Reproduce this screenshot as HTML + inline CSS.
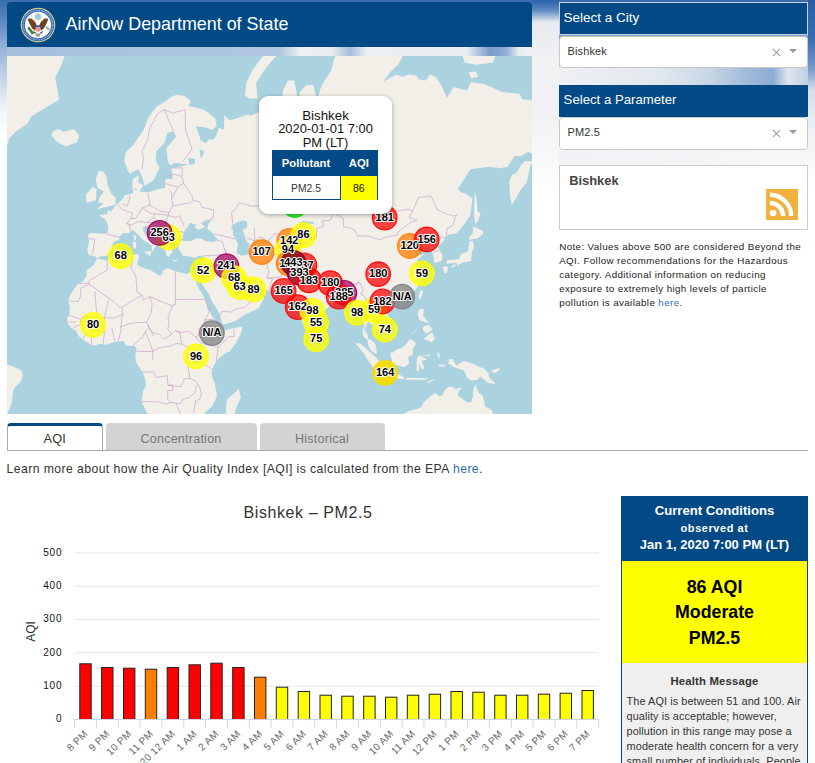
<!DOCTYPE html>
<html><head><meta charset="utf-8"><title>AirNow Department of State</title>
<style>
*{box-sizing:border-box;margin:0;padding:0}
html,body{width:815px;height:763px;overflow:hidden;background:#fff;font-family:"Liberation Sans",sans-serif;color:#333}
.abs{position:absolute}
.tx{position:absolute;white-space:nowrap}
#sky{position:absolute;left:0;top:0;width:815px;height:300px;background:linear-gradient(180deg,#3a6cae 0px,#5585c0 18px,#98b5d8 50px,#cfdcec 85px,#f1f5f9 110px,#fff 140px);}
#sky2{position:absolute;left:532px;top:0;width:27px;height:300px;background:linear-gradient(180deg,#2a62aa 0px,#5a88c0 10px,#e6e9ee 22px,#f1f2f4 60px,#f0f1f4 110px,#f8f9fa 160px,#fff 200px)}
#sky3{position:absolute;left:808px;top:0;width:7px;height:300px;background:linear-gradient(180deg,#2a5ea6 0px,#3a6db2 40px,#7c9fcb 70px,#d5dfea 90px,#eef2f6 130px,#fff 190px)}
#sky4{position:absolute;left:559px;top:67px;width:249px;height:18px;background:linear-gradient(90deg,#eef0f3 0%,#e3e8ee 40%,#c9d6e6 60%,#a2bbd9 75%,#8eacd3 86%,#dfe6ee 92%,#c0d0e4 100%)}
#sky5{position:absolute;left:559px;top:149px;width:249px;height:16px;background:linear-gradient(90deg,#f0f2f5 0%,#f6f7f9 100%)}
#sky6{position:absolute;left:7px;top:47px;width:525px;height:9px;background:linear-gradient(90deg,#a6bfdc 0%,#b0c6e0 52%,#eef0f3 56%,#e8ecf0 62%,#a5bdda 65.3%,#eceff3 68.5%,#e9edf2 87.5%,#7a9dcc 92%,#8fadd4 95%,#e8ecf1 97.5%,#f0f2f5 100%)}
#hdr{left:7px;top:2px;width:525px;height:45px;background:#024a86;border-radius:4px 4px 0 0}
#seal{position:absolute;left:13.4px;top:4.9px}
.map{position:absolute;left:7px;top:56px}
.panelh{position:absolute;left:559px;width:249px;height:33px;background:#024a86;border:1px solid #c9d3df}
.sel{position:absolute;left:559px;width:249px;height:31px;background:#fff;border:1px solid #c8c8c8;border-radius:4px}
.sel .x{position:absolute;left:212.3px;top:11.3px}
.sel .ar{position:absolute;left:229px;top:12px;width:0;height:0;border-left:4px solid transparent;border-right:4px solid transparent;border-top:4.6px solid #999}
#box{left:559px;top:165px;width:249px;height:65px;border:1px solid #ccc;background:#fff}
#rss{position:absolute;left:206px;top:23px;width:32px;height:31px;background:#f1b13c}
a{color:#2f6db5;text-decoration:none}
#popup{left:259px;top:96px;width:133px;height:118px;background:#fff;border-radius:9px;box-shadow:0 1px 4px rgba(0,0,0,0.35)}
#ptab{position:absolute;left:13px;top:54px;width:106px;height:50px;border:1px solid #024a86}
#tabs{left:7px;top:423px;width:801px;height:28px;border-bottom:1px solid #aaa}
.tab{position:absolute;top:0;height:27px;background:#d3d3d3;border-radius:4px 4px 0 0}
.tab.on{background:#fff;border:1px solid #aaa;border-top:3px solid #024a86;border-bottom:none;height:27px}
.chart{position:absolute;left:0;top:0}
#cc{left:621px;top:496px;width:187px;height:267px;border-left:1px solid #024a86;border-right:1px solid #024a86;background:#efefef}
#cch{position:absolute;left:-1px;top:0;width:187px;height:65px;background:#024a86}
#ccy{position:absolute;left:0;top:65px;width:185px;height:102px;background:#ffff00}
</style></head><body>
<div id="sky"></div><div id="sky2"></div><div id="sky3"></div><div id="sky4"></div><div id="sky5"></div><div id="sky6"></div>
<div id="hdr" class="abs">
<svg id="seal" width="36" height="36" viewBox="0 0 36 36">
<circle cx="18" cy="18" r="17.3" fill="#d9c45a"/>
<circle cx="18" cy="18" r="16.6" fill="#f4f1e0"/>
<circle cx="18" cy="18" r="16.2" fill="#2f66b3"/>
<circle cx="18" cy="18" r="14.8" fill="none" stroke="#e4ecf7" stroke-width="1.1" stroke-dasharray="0.9 0.7" opacity="0.75"/>
<circle cx="18" cy="18" r="13.2" fill="#fbfbf8"/>
<circle cx="18" cy="9.8" r="3.9" fill="#e6ecef"/>
<circle cx="18" cy="9.8" r="3.0" fill="#9fcbe0"/>
<path d="M7.6 11.8 Q11.5 11 14.2 13.4 L16.3 17.2 L16 21.5 L14.6 23.5 L12.2 21.2 Q9.2 17 7.6 11.8Z" fill="#6f4320"/>
<path d="M28.4 11.8 Q24.5 11 21.8 13.4 L19.7 17.2 L20 21.5 L21.4 23.5 L23.8 21.2 Q26.8 17 28.4 11.8Z" fill="#6f4320"/>
<path d="M10.8 10.6 L15.2 15.2 M25.2 10.6 L20.8 15.2" stroke="#cdb84a" stroke-width="1"/>
<circle cx="18" cy="16.2" r="1.8" fill="#fff"/>
<rect x="15.6" y="18.3" width="4.8" height="1.9" fill="#2a5aa8"/>
<path d="M15.6 20.2 h4.8 v3.4 l-2.4 1.5 l-2.4 -1.5z" fill="#e98d8f"/>
<path d="M8 20.5 Q10.5 22.5 13 27" stroke="#3b8a3c" stroke-width="2.6" fill="none"/>
<path d="M25.8 19.8 L29.3 23" stroke="#a9a9a9" stroke-width="2"/>
<path d="M15.3 26.6 L20.7 26.6 L19.6 29.4 L16.4 29.4Z" fill="#9a9a9a"/>
<path d="M13.4 24.6 L15.6 26.2 M22.6 24.6 L20.4 26.2" stroke="#2a2a2a" stroke-width="1.1"/>
</svg>
</div>
<svg class="map" width="525" height="358" viewBox="7 56 525 358">
<rect x="7" y="56" width="525" height="358" fill="#aad3df"/>
<path d="M462.4 55.0L495.6 55.0L493.3 62.6L475.7 64.8L464.6 62.6ZM469.0 72.0L476.0 71.5L478.0 77.0L471.0 78.0ZM6.0 55.0L65.0 55.0L64.4 56.4L60.7 66.6L55.2 77.6L57.0 86.8L58.9 99.7L49.7 105.2L31.3 116.3L27.6 123.6L16.6 131.0L9.2 138.3L7.4 145.7L6.0 147.0ZM53.4 131.0L58.9 129.1L63.5 131.9L73.6 129.1L79.1 135.6L77.3 142.0L66.3 146.6L60.7 143.9L55.2 140.2L51.5 134.7ZM263.9 55.0L252.9 69.3L246.3 82.5L245.1 95.8L250.0 98.8L257.3 98.4L256.2 82.5L268.3 64.8L277.2 55.0ZM96.9 209.0L115.3 205.0L115.8 198.0L112.0 194.6L107.7 185.8L106.4 176.0L102.6 171.2L98.7 171.2L95.7 178.9L97.2 186.7L99.5 188.9L103.8 191.5L99.5 197.6L98.2 202.2L103.3 203.4ZM96.2 200.1L96.2 192.4L96.9 189.4L92.8 186.7L89.8 190.2L86.0 194.6L86.2 202.6L90.5 201.7ZM97.2 258.3L95.4 256.7L88.8 255.1L87.2 249.6L89.3 241.3L87.7 235.1L90.5 233.0L103.8 233.7L107.7 233.3L108.4 226.2L105.9 219.9L99.2 215.3L107.7 214.1L107.4 210.2L111.0 211.8L116.1 205.0L123.0 198.8L124.3 195.4L133.2 193.3L132.2 185.8L132.7 178.9L138.6 175.6L138.3 182.6L143.4 184.9L139.6 191.5L147.3 192.4L158.8 188.9L165.2 188.0L165.2 178.9L172.8 178.9L171.5 168.2L188.2 164.7L175.4 162.7L170.3 165.2L167.7 161.6L166.4 148.1L176.4 136.5L173.3 131.5L167.7 132.8L163.9 143.6L156.2 151.5L155.7 160.6L159.5 167.7L153.7 180.3L144.7 185.8L141.6 175.6L138.3 169.2L129.4 174.1L124.3 161.6L125.6 152.0L133.2 145.3L138.3 137.7L143.4 130.3L148.5 117.2L152.4 111.7L157.5 105.9L165.2 101.4L171.5 96.8L177.4 94.5L184.3 96.1L190.7 100.7L188.2 105.9L195.8 107.4L203.5 109.5L215.0 117.9L216.8 125.8L212.4 129.7L203.5 127.1L195.8 126.5L199.6 136.5L200.4 140.6L206.0 143.0L208.6 139.5L213.7 139.5L216.3 135.2L218.8 127.8L223.9 129.7L224.4 115.1L229.0 119.9L234.1 119.2L246.9 114.5L250.7 115.8L257.1 113.1L264.8 110.2L267.4 104.4L280.1 108.1L285.2 115.1L282.7 102.9L282.7 91.3L287.8 80.5L294.2 80.5L297.0 95.3L297.5 113.8L299.8 117.2L301.8 106.6L299.3 92.9L305.7 85.6L313.3 84.7L317.2 101.4L319.7 91.3L322.3 83.9L331.2 70.6L333.8 60.2L336.3 54.1L403.5 55.0L402.8 56.0L399.0 63.4L390.5 72.0L383.1 81.8L396.6 74.4L402.8 76.9L408.9 74.4L416.3 75.6L418.7 79.3L426.0 80.5L429.8 74.4L435.9 76.9L440.8 84.2L446.9 97.7L453.6 87.2L466.9 90.5L471.2 82.2L484.5 83.9L502.2 92.1L519.8 93.7L522.1 99.2L532.8 100.7L532.8 153.7L528.0 152.0L520.3 156.4L514.9 155.8L507.5 166.7L499.9 168.2L489.6 166.7L477.1 168.2L470.5 169.2L457.7 188.9L461.5 192.4L465.4 193.3L472.3 198.8L470.5 214.9L465.4 222.5L456.9 233.3L448.8 234.4L445.4 237.5L442.4 242.6L437.3 246.0L439.8 250.3L442.4 255.1L441.9 260.5L438.5 262.0L434.2 263.0L433.9 258.3L432.2 251.9L429.1 246.0L421.9 249.3L420.7 242.6L413.0 248.6L415.5 253.5L419.9 255.4L424.5 254.1L418.1 258.9L416.3 263.0L420.7 270.6L422.7 273.6L423.0 276.6L419.4 282.4L416.8 288.2L413.0 292.4L409.2 296.6L402.8 298.5L397.7 299.9L393.8 301.6L393.1 304.0L391.3 300.7L387.4 300.7L384.1 302.9L381.8 307.5L383.6 311.6L388.0 315.6L390.5 322.2L390.5 326.6L387.4 329.2L383.6 332.4L379.3 334.9L379.8 331.3L378.5 330.0L375.4 328.2L373.4 325.6L369.3 322.4L367.0 322.7L365.0 330.0L367.8 335.2L368.5 339.6L370.8 339.6L375.4 344.2L376.7 350.6L377.0 353.7L374.7 353.2L370.3 349.8L367.8 344.2L367.8 340.4L363.2 336.0L362.7 331.3L363.4 326.1L361.4 314.8L357.5 313.4L354.2 316.1L352.4 315.6L352.9 308.9L350.4 306.2L347.3 302.1L346.0 298.0L342.7 298.8L338.9 299.9L333.8 302.1L333.0 304.3L328.7 306.7L321.5 314.0L316.7 316.9L316.4 323.5L315.4 330.5L311.3 334.2L309.5 336.2L307.0 333.4L304.4 326.6L302.1 320.9L299.5 314.0L297.5 307.5L297.2 301.6L295.7 300.7L291.6 302.6L287.8 298.5L290.4 297.1L286.8 294.4L282.7 291.6L278.9 290.1L268.9 290.4L261.7 289.6L257.6 285.6L255.3 285.0L250.7 286.2L243.1 282.7L240.0 277.2L235.4 276.6L234.1 278.1L238.0 285.3L242.3 292.1L243.3 287.9L249.5 293.2L254.6 288.2L255.3 287.3L255.9 292.4L261.2 294.9L264.3 298.2L261.0 303.5L259.2 307.5L253.3 310.8L244.4 315.0L235.4 320.9L226.5 324.0L222.6 324.3L220.6 318.2L220.1 314.2L211.7 300.7L208.6 293.8L204.8 288.2L200.9 282.1L200.9 278.1L198.9 283.0L194.8 276.9L197.1 285.3L202.2 294.1L206.5 302.1L207.1 308.9L209.9 311.6L212.4 316.9L217.5 322.2L221.9 327.2L225.2 330.3L232.9 328.2L242.6 326.6L241.8 330.3L240.5 333.9L235.4 344.2L229.0 351.9L227.2 351.9L218.8 358.3L215.0 363.4L212.4 368.5L211.7 373.6L212.4 377.5L215.0 384.0L217.0 395.8L215.0 400.6L211.7 406.7L203.0 414.4L148.0 414.4L142.2 403.8L141.6 399.8L143.4 390.5L146.0 385.3L145.2 379.6L142.9 372.4L135.8 362.1L135.3 355.7L136.5 348.1L134.0 345.5L126.8 346.0L123.0 340.9L114.1 341.9L106.4 344.7L101.3 343.7L92.3 345.7L88.5 342.9L82.1 339.3L77.8 335.2L76.2 330.8L72.4 328.7L68.6 324.8L66.8 319.0L69.3 314.2L69.9 306.2L68.1 302.1L70.1 295.2L74.5 288.2L77.8 283.9L83.4 281.0L87.0 275.1L86.5 270.6L94.1 264.5L96.7 258.9L98.0 258.6L106.4 260.8L111.5 258.6L119.2 255.7L133.2 255.1L137.1 254.1L139.6 255.4L138.3 259.9L137.1 264.5L140.9 267.0L149.8 269.7L160.0 275.7L162.6 273.6L162.6 270.6L167.7 267.9L175.4 271.2L186.9 273.9L190.7 272.1L194.0 273.0L199.6 271.8L201.2 267.6L203.2 259.9L204.0 256.4L199.6 255.7L194.5 258.0L189.4 256.4L183.0 255.7L179.2 250.3L178.4 247.0L179.2 244.3L177.9 243.3L172.8 242.6L169.8 243.6L171.5 248.6L172.8 251.9L170.3 254.5L169.0 257.0L166.4 255.7L165.4 250.9L162.1 245.3L161.3 240.3L157.5 236.5L152.4 233.3L148.5 227.2L146.2 225.4L142.9 226.9L143.4 231.5L147.3 236.8L152.4 240.3L158.8 244.3L154.9 247.0L153.7 250.3L151.6 251.9L151.9 245.3L147.3 242.6L142.2 239.2L138.3 235.1L133.2 230.1L129.4 233.0L123.0 233.3L119.2 236.8L119.7 239.2L113.8 241.9L111.5 247.0L110.2 251.2L107.7 255.1L105.9 256.1L100.0 256.4ZM532.8 161.6L530.5 165.2L528.5 174.1L526.7 182.6L520.3 190.2L516.7 197.1L511.9 205.0L510.1 196.7L509.3 181.2L512.1 175.1L516.5 172.7L521.6 164.2L525.4 161.1ZM143.4 251.6L151.4 250.9L150.1 256.1ZM132.7 241.9L136.3 241.9L136.0 248.6L133.5 248.6ZM133.5 235.4L135.8 235.1L135.8 240.6L134.0 240.3ZM171.5 259.5L178.7 260.5L174.1 261.4ZM194.0 261.4L199.6 259.5L197.1 262.7ZM469.2 240.3L472.3 239.2L477.4 238.5L483.3 234.0L482.5 230.5L473.5 226.5L472.5 234.0L469.2 237.2ZM472.8 240.9L474.1 247.0L471.8 251.9L471.5 256.7L471.0 261.1L467.2 261.7L461.5 263.0L457.2 266.1L456.4 262.7L451.3 263.3L446.2 263.9L447.5 259.9L451.3 259.9L459.0 258.9L461.0 254.1L467.9 251.2L469.2 243.6L470.0 240.9ZM443.7 266.1L448.2 267.0L447.0 272.4L444.2 273.0L442.9 267.6ZM450.0 267.0L455.7 263.9L454.4 267.0ZM474.8 191.1L476.9 200.9L477.4 211.0L480.7 213.7L478.1 220.6L475.6 224.3L474.1 218.7L474.3 203.0ZM420.7 290.1L423.2 291.0L420.7 299.4L418.4 296.6ZM389.0 307.0L393.8 304.6L395.1 305.9L391.5 309.7ZM315.4 331.8L320.8 337.5L319.2 341.1L316.2 341.6L315.4 336.7ZM419.4 308.9L424.0 308.9L423.2 315.6L428.8 323.0L425.8 322.2L419.6 320.3L417.6 314.8ZM423.2 339.1L432.2 332.1L434.7 339.1L431.6 342.4L428.3 340.4ZM423.2 326.6L428.3 324.8L432.4 328.7L429.6 331.8L425.8 333.4L423.0 330.0ZM410.9 335.5L417.6 327.9L416.1 330.8ZM390.0 352.4L391.5 359.6L392.6 364.4L396.4 364.7L404.0 367.2L409.2 363.4L407.9 357.0L413.0 354.4L412.5 349.3L416.1 343.4L411.2 339.1L408.6 340.4L406.1 344.2L401.5 348.1L395.9 349.8L392.8 352.7ZM355.0 342.7L360.6 343.7L368.3 350.6L376.7 358.3L382.3 364.7L381.8 371.8L378.5 372.1L372.9 367.2L368.3 360.8L363.4 352.7ZM380.3 374.4L382.3 372.1L388.2 372.9L395.1 373.4L399.4 374.7L404.0 377.0L403.8 379.3L392.6 377.8L383.6 375.7ZM405.8 378.0L415.5 378.0L424.5 378.3L429.6 378.3L424.5 379.8L415.5 379.8L405.8 379.6ZM428.3 381.4L436.5 378.5L432.2 380.9L427.0 383.5ZM416.6 371.1L419.1 371.1L419.4 363.4L421.4 369.3L424.5 368.5L421.9 360.8L427.0 359.6L420.7 355.7L429.6 354.4L431.4 352.9L429.1 356.0L418.9 355.5L416.8 358.3ZM437.3 352.4L439.8 353.9L439.3 359.0L437.8 356.2ZM438.5 364.7L445.7 364.7L444.9 366.5L438.5 366.2ZM446.2 360.3L452.6 358.8L456.4 365.4L464.1 361.1L471.8 363.6L484.0 368.5L488.4 372.9L489.1 377.5L496.0 384.0L488.4 382.9L480.2 376.5L477.6 380.1L471.8 380.4L466.6 377.8L465.4 373.6L463.6 370.3L454.4 367.2L450.0 364.2L447.5 363.4L450.0 360.8ZM490.7 371.1L499.9 367.7L498.6 371.1L494.8 372.9ZM401.5 414.4L403.0 414.1L409.2 410.8L415.5 409.2L420.7 407.8L424.0 401.9L427.0 399.2L430.9 395.8L435.5 392.9L439.1 396.3L442.4 395.5L444.2 391.0L446.2 388.4L450.3 386.6L456.4 388.7L460.3 387.4L461.5 388.7L458.7 391.3L457.7 395.2L462.8 399.2L467.4 402.2L471.2 402.4L473.0 395.8L473.3 389.2L475.6 384.5L478.1 392.6L482.7 395.8L485.3 406.5L491.7 410.0L493.5 414.4ZM238.8 388.8L240.9 397.5L236.0 408.0L234.4 414.0L225.7 414.0L226.8 399.6L234.4 393.1ZM6.2 364.4L13.1 366.5L21.6 370.8L22.6 375.2L21.3 380.6L17.0 385.3L13.1 390.5L11.9 402.4L8.8 410.0L7.0 414.4L6.2 414.4Z" fill="#f2efe9"/>
<path d="M183.0 240.9L183.0 235.1L184.6 230.8L187.4 227.2L190.2 222.5L193.3 224.0L197.1 224.7L194.5 226.9L197.9 230.1L202.2 228.0L205.0 226.9L200.9 223.2L206.0 220.2L211.7 219.9L208.6 223.2L207.3 229.0L211.1 231.5L217.8 239.9L213.7 241.9L206.0 241.3L200.9 238.5L195.8 238.5L190.7 241.3ZM236.7 222.5L243.1 220.6L246.9 221.4L247.4 226.9L242.6 229.8L245.6 238.5L246.9 241.9L249.5 243.6L249.0 248.6L249.2 254.1L241.8 255.7L236.7 253.2L237.5 247.0L238.0 243.6L235.4 238.5L232.9 235.1L232.9 229.8L230.8 228.7L232.9 225.1ZM188.2 158.0L195.3 159.0L194.5 164.2L189.4 164.7ZM199.6 149.2L204.2 150.9L202.2 158.0L200.2 156.4ZM299.3 222.5L303.1 221.0L313.3 222.1L313.9 224.3L308.2 223.6L302.6 225.4L299.5 228.0ZM192.7 357.5L198.4 356.2L200.4 360.1L197.1 364.2L192.7 362.6Z" fill="#aad3df"/>
<path d="M88.8 238.9L94.9 238.9L93.6 247.0L92.6 254.5M106.9 234.0L113.3 235.8L119.4 237.2M117.9 204.6L122.2 209.4L126.3 211.0L132.5 213.0L130.9 218.3L126.8 223.6L129.4 225.1L130.7 232.3M126.8 223.6L131.9 224.7L138.3 221.4L146.5 222.5L153.7 217.6L154.9 213.7L149.8 213.0L142.4 207.8L135.8 218.7L130.9 218.3M122.2 203.8L126.8 206.2L129.4 200.1L129.9 195.4M133.5 188.5L137.1 190.2M148.0 193.3L149.3 200.9L149.8 205.0L142.4 207.8M149.8 205.0L159.5 211.0L169.0 212.6L172.8 205.8L171.8 198.8L171.5 192.4L169.8 190.7M154.9 213.7L168.2 215.3L169.0 212.6M153.7 217.6L160.8 224.3L165.2 223.6L168.2 215.3M146.5 222.5L153.1 222.5L160.8 224.3L160.0 228.7L161.3 236.5M168.2 215.3L175.1 217.6L179.5 215.7L183.6 224.3L183.6 226.2M165.2 223.6L169.5 229.8L180.5 231.5L184.6 232.6M169.5 229.8L168.7 237.5L163.9 241.9L165.2 244.0L179.2 240.9L183.0 239.2M172.8 205.8L189.4 203.0L193.3 200.5L199.4 201.7L202.2 207.4L213.7 209.8L213.2 217.6L209.1 220.2M171.8 198.8L177.9 187.1L183.6 183.1L192.0 195.9L193.3 200.5M165.2 183.5L177.9 187.1M165.2 176.5L174.1 174.1L181.8 176.5L183.6 183.1M171.5 168.2L182.5 167.7L181.8 176.5M142.2 169.2L143.4 159.0L142.2 150.9L147.8 139.5L149.8 128.4L157.5 113.8L164.1 109.5L172.8 113.1L185.1 109.5L185.6 130.3L192.0 149.2L182.5 161.6M164.1 109.5L171.8 127.1L173.3 131.5M177.9 238.5L183.0 239.2M203.5 255.7L208.6 255.7L219.6 254.8L226.0 254.5L224.7 249.0L223.9 247.3L222.6 241.9L217.5 240.3M213.7 233.7L223.9 236.1L235.4 239.2M203.0 258.9L205.5 267.6L210.6 266.4L216.3 263.3L219.6 254.8M201.2 267.6L202.5 266.7L205.5 267.6M210.6 266.4L211.7 270.0L206.0 272.1L200.9 278.1M211.7 270.0L218.8 273.3L225.7 278.9L230.3 279.2L233.6 281.0M224.7 249.0L229.0 258.9L227.8 264.5L234.7 275.7M243.3 293.0L244.4 296.0L253.0 297.4L253.8 299.4L244.4 307.5L236.7 308.6L230.8 312.1L222.1 311.3L220.9 314.5M253.0 297.4L255.1 291.3L255.3 288.2M249.0 254.1L253.6 252.5L257.6 250.9L267.9 256.4L266.8 263.0L268.6 272.4L267.1 278.1L272.5 278.1L268.9 290.4M267.9 256.4L276.3 254.1L281.4 253.8L286.0 251.2L291.6 250.3L294.2 255.1L302.9 254.1M267.1 278.1L269.9 278.3L280.9 276.9L281.9 273.0L288.6 270.9L291.6 264.8L293.4 263.6L294.2 258.3L302.9 254.1M291.6 264.8L301.6 262.0L308.2 259.9L313.3 263.6L312.8 269.1L314.6 270.6L318.5 276.0L316.2 280.1L321.0 283.9L327.7 284.4L336.6 287.0L336.9 283.0L340.9 281.8L346.6 285.9L355.2 283.9L359.3 281.8M288.6 270.9L294.9 276.0L291.1 282.4L289.1 286.2L292.1 289.6L287.3 293.0M336.6 287.0L338.6 289.3L337.6 293.8L338.6 297.7M346.6 285.9L347.6 291.0L347.6 298.8M359.3 281.8L363.2 289.6L360.9 294.1L364.2 296.0L365.7 299.1L369.8 299.9L372.1 298.2L378.5 297.1L381.8 296.9L384.1 299.4L387.4 300.5M347.6 298.8L349.1 297.7L352.4 292.4L354.5 286.5L359.3 281.8M365.7 299.1L368.3 304.0L361.9 308.9L360.4 314.2L363.2 322.2L365.0 330.5M368.3 304.0L372.1 310.2L378.5 311.3L381.3 316.1L381.1 320.9L374.7 320.3L373.4 325.6M369.8 299.9L372.6 307.5L378.5 310.2L383.6 314.2L386.2 319.0L382.3 328.7L379.8 330.0M232.9 225.1L231.6 212.2L235.4 209.0L239.2 203.0L252.0 206.2L267.4 205.0L267.1 193.3L278.9 189.4L287.8 186.7L299.3 192.4L307.7 191.1L315.9 205.0L323.6 205.8L334.3 212.2M249.2 254.1L254.6 240.9L246.9 237.8M254.6 240.9L260.2 236.8L264.8 238.9L267.4 241.9L275.0 233.0L280.1 235.4L279.9 240.9L286.8 243.3L291.6 250.3M254.3 228.0L254.6 240.9M267.4 241.9L270.7 245.6L278.9 250.9L281.4 253.8M286.8 243.3L292.9 237.5L299.3 236.8L305.7 235.4L316.4 237.8L316.7 228.0L323.1 226.9L322.5 220.6L330.0 220.6L334.3 212.2M291.6 250.3L299.3 247.3L303.1 244.3L308.2 241.9L316.4 237.8M299.3 247.3L302.9 254.1M334.3 212.2L338.9 211.0L344.0 209.0L351.7 207.0L361.9 200.9L372.1 205.0L382.3 207.8L387.4 211.8L397.7 211.0L407.9 209.0L412.5 211.0L409.2 217.6L417.3 220.6L411.5 222.1L401.5 229.0L397.4 232.6L397.1 235.1L386.2 237.2L379.8 239.9L369.0 236.1L357.5 235.8L355.0 230.5L350.4 228.0L343.7 226.9L343.2 218.0L336.3 214.5L334.3 212.2M412.5 211.0L418.6 197.6L430.9 195.9L437.3 209.8L445.2 213.4L453.1 216.1L456.4 214.9L452.3 226.2L447.0 228.3L446.2 236.5L445.4 237.5M429.1 246.0L434.7 240.6L439.1 240.3L442.4 237.2L445.4 237.5M434.2 252.5L439.6 249.9M107.2 261.4L107.2 270.0L102.3 273.0L89.3 280.4L89.3 284.4L99.2 291.3L114.6 302.4L119.9 307.3L122.2 307.0L122.5 314.2L114.1 318.2L110.2 317.7L104.3 318.0L97.7 316.9L96.7 314.2L94.9 291.3M89.3 284.4L80.8 288.2L80.8 295.2L78.3 301.3L68.1 301.3M78.3 283.3L89.3 283.3M97.7 316.9L82.1 317.2L80.3 319.3L68.6 314.8M132.7 255.4L132.5 261.4L130.7 267.0L135.8 276.0L137.1 292.1L141.9 295.2L143.4 299.9L147.3 298.0L149.8 296.6L172.6 306.2L172.8 304.8L175.4 304.8L175.4 299.4L175.4 271.8M175.4 299.4L191.5 299.4L205.8 299.4M122.2 307.0L141.9 295.2M122.5 314.2L120.7 326.9L121.2 330.0L118.4 340.6M120.7 326.9L129.4 323.5L137.1 322.7L146.5 322.2L147.8 324.8L148.8 327.4L145.2 331.8L142.2 337.8L139.3 339.1L136.5 342.9L133.5 345.2M149.8 296.6L152.1 303.7L151.1 313.4L146.5 322.2M172.6 306.2L168.0 316.9L169.0 323.5L167.7 329.2L171.5 334.4L175.4 330.5L179.7 332.9L181.8 344.2L190.2 348.1L190.7 351.4L188.2 354.4L187.1 360.3L189.9 378.5L195.6 381.1L199.6 386.6L201.4 394.2L199.6 399.5L195.6 400.3L193.8 412.7M205.8 299.4L206.0 302.1L210.1 310.2L204.8 320.1L204.0 324.3L199.1 328.7L198.4 335.2L195.8 337.0L201.4 343.4L218.3 346.8L216.3 361.1M204.8 320.1L209.9 319.5L214.0 319.5L217.5 323.5L219.8 325.1M218.3 346.8L221.4 344.5L229.0 336.5L234.1 336.5L233.9 328.5M195.8 337.0L189.4 331.3L180.5 332.4L175.4 330.5M148.8 327.4L152.4 332.6L159.0 334.2L163.9 339.1L171.5 334.4M147.8 324.8L153.7 336.2M145.2 331.8L149.3 340.9L152.9 351.4L152.4 359.6M152.9 351.4L158.8 347.8L169.0 346.3L176.7 343.4L181.8 344.2M136.0 351.1L140.4 351.4L148.8 351.4L152.9 351.4M188.2 354.4L198.1 357.0L198.4 359.6L207.8 366.2L211.7 369.0M188.2 354.4L187.1 360.3M142.7 371.8L153.7 372.1L156.2 377.5L167.2 375.7L168.0 385.3L172.6 385.0L172.8 390.5L167.7 390.5L167.7 399.0L171.0 402.4L176.1 403.2L180.5 403.5L183.0 399.5L189.2 397.4L195.6 392.1L196.3 385.3M141.6 401.9L146.0 401.4L158.8 401.9L165.2 403.8L171.0 402.4M168.0 385.3L181.0 386.8L184.3 378.8L189.9 378.5M176.1 403.2L180.5 414.4M108.4 300.5L104.3 318.0M104.3 318.0L104.3 332.4L97.7 330.3L90.8 331.1L91.8 345.7M104.3 332.4L103.3 344.0M112.0 328.5L114.8 341.4M97.7 330.3L97.4 327.7L82.4 325.1L80.8 324.8L76.5 325.6L72.9 328.5M90.8 331.1L84.7 335.7L82.6 339.3M80.6 319.3L80.6 324.8M68.8 321.9L76.2 322.2" fill="none" stroke="#c9a3cc" stroke-width="0.7" stroke-linejoin="round"/>
<g><circle cx="294.8" cy="205" r="12.3" fill="#00e400" fill-opacity="0.75" stroke="#00e400" stroke-opacity="0.9" stroke-width="1.2"/><circle cx="93.0" cy="325.0" r="12.3" fill="#ffff00" fill-opacity="0.78" stroke="#ffff00" stroke-opacity="0.9" stroke-width="1.2"/><circle cx="120.7" cy="256.1" r="12.3" fill="#ffff00" fill-opacity="0.78" stroke="#ffff00" stroke-opacity="0.9" stroke-width="1.2"/><circle cx="168.7" cy="237.4" r="12.3" fill="#ffff00" fill-opacity="0.78" stroke="#ffff00" stroke-opacity="0.9" stroke-width="1.2"/><circle cx="159.6" cy="232.9" r="12.3" fill="#a3005c" fill-opacity="0.72" stroke="#a3005c" stroke-opacity="0.9" stroke-width="1.2"/><circle cx="203.2" cy="270.5" r="12.3" fill="#ffff00" fill-opacity="0.78" stroke="#ffff00" stroke-opacity="0.9" stroke-width="1.2"/><circle cx="226.4" cy="266.1" r="12.3" fill="#a3005c" fill-opacity="0.72" stroke="#a3005c" stroke-opacity="0.9" stroke-width="1.2"/><circle cx="234.1" cy="278.2" r="12.3" fill="#ffff00" fill-opacity="0.78" stroke="#ffff00" stroke-opacity="0.9" stroke-width="1.2"/><circle cx="239.6" cy="287" r="12.3" fill="#ffff00" fill-opacity="0.78" stroke="#ffff00" stroke-opacity="0.9" stroke-width="1.2"/><circle cx="253.6" cy="289.5" r="12.3" fill="#ffff00" fill-opacity="0.78" stroke="#ffff00" stroke-opacity="0.9" stroke-width="1.2"/><circle cx="261.6" cy="252.1" r="12.3" fill="#ff7e00" fill-opacity="0.75" stroke="#ff7e00" stroke-opacity="0.9" stroke-width="1.2"/><circle cx="211.9" cy="333.1" r="12.3" fill="#808080" fill-opacity="0.75" stroke="#808080" stroke-opacity="0.9" stroke-width="1.2"/><circle cx="196" cy="356.4" r="12.3" fill="#ffff00" fill-opacity="0.78" stroke="#ffff00" stroke-opacity="0.9" stroke-width="1.2"/><circle cx="289.3" cy="240.8" r="12.3" fill="#ff7e00" fill-opacity="0.75" stroke="#ff7e00" stroke-opacity="0.9" stroke-width="1.2"/><circle cx="303.4" cy="235.2" r="12.3" fill="#ffff00" fill-opacity="0.78" stroke="#ffff00" stroke-opacity="0.9" stroke-width="1.2"/><circle cx="287.9" cy="249.3" r="12.3" fill="#ffff00" fill-opacity="0.78" stroke="#ffff00" stroke-opacity="0.9" stroke-width="1.2"/><circle cx="288.7" cy="263.5" r="12.3" fill="#ff7e00" fill-opacity="0.75" stroke="#ff7e00" stroke-opacity="0.9" stroke-width="1.2"/><circle cx="304.4" cy="265.3" r="12.3" fill="#ff0000" fill-opacity="0.72" stroke="#ff0000" stroke-opacity="0.9" stroke-width="1.2"/><circle cx="293.4" cy="262.9" r="12.3" fill="#7e0023" fill-opacity="0.8" stroke="#7e0023" stroke-opacity="0.9" stroke-width="1.2"/><circle cx="299.5" cy="272.7" r="12.3" fill="#7e0023" fill-opacity="0.8" stroke="#7e0023" stroke-opacity="0.9" stroke-width="1.2"/><circle cx="309.0" cy="280.3" r="12.3" fill="#ff0000" fill-opacity="0.72" stroke="#ff0000" stroke-opacity="0.9" stroke-width="1.2"/><circle cx="330.2" cy="283.1" r="12.3" fill="#ff0000" fill-opacity="0.72" stroke="#ff0000" stroke-opacity="0.9" stroke-width="1.2"/><circle cx="384.7" cy="217.7" r="12.3" fill="#ff0000" fill-opacity="0.72" stroke="#ff0000" stroke-opacity="0.9" stroke-width="1.2"/><circle cx="409.8" cy="246" r="12.3" fill="#ff7e00" fill-opacity="0.75" stroke="#ff7e00" stroke-opacity="0.9" stroke-width="1.2"/><circle cx="426.7" cy="239.4" r="12.3" fill="#ff0000" fill-opacity="0.72" stroke="#ff0000" stroke-opacity="0.9" stroke-width="1.2"/><circle cx="378.2" cy="274.1" r="12.3" fill="#ff0000" fill-opacity="0.72" stroke="#ff0000" stroke-opacity="0.9" stroke-width="1.2"/><circle cx="421.9" cy="273.3" r="12.3" fill="#ffff00" fill-opacity="0.78" stroke="#ffff00" stroke-opacity="0.9" stroke-width="1.2"/><circle cx="344.3" cy="293" r="12.3" fill="#a3005c" fill-opacity="0.72" stroke="#a3005c" stroke-opacity="0.9" stroke-width="1.2"/><circle cx="338.7" cy="296.7" r="12.3" fill="#ff0000" fill-opacity="0.72" stroke="#ff0000" stroke-opacity="0.9" stroke-width="1.2"/><circle cx="357" cy="312.8" r="12.3" fill="#ffff00" fill-opacity="0.78" stroke="#ffff00" stroke-opacity="0.9" stroke-width="1.2"/><circle cx="374" cy="310" r="12.3" fill="#ffff00" fill-opacity="0.78" stroke="#ffff00" stroke-opacity="0.9" stroke-width="1.2"/><circle cx="382.4" cy="301.5" r="12.3" fill="#ff0000" fill-opacity="0.72" stroke="#ff0000" stroke-opacity="0.9" stroke-width="1.2"/><circle cx="402.2" cy="296.7" r="12.3" fill="#808080" fill-opacity="0.75" stroke="#808080" stroke-opacity="0.9" stroke-width="1.2"/><circle cx="384.8" cy="329.5" r="12.3" fill="#ffff00" fill-opacity="0.78" stroke="#ffff00" stroke-opacity="0.9" stroke-width="1.2"/><circle cx="283.6" cy="291" r="12.3" fill="#ff0000" fill-opacity="0.72" stroke="#ff0000" stroke-opacity="0.9" stroke-width="1.2"/><circle cx="297.7" cy="307.1" r="12.3" fill="#ff0000" fill-opacity="0.72" stroke="#ff0000" stroke-opacity="0.9" stroke-width="1.2"/><circle cx="312.4" cy="310.8" r="12.3" fill="#ffff00" fill-opacity="0.78" stroke="#ffff00" stroke-opacity="0.9" stroke-width="1.2"/><circle cx="316.1" cy="322.7" r="12.3" fill="#ffff00" fill-opacity="0.78" stroke="#ffff00" stroke-opacity="0.9" stroke-width="1.2"/><circle cx="316.2" cy="339.2" r="12.3" fill="#ffff00" fill-opacity="0.78" stroke="#ffff00" stroke-opacity="0.9" stroke-width="1.2"/><circle cx="385.1" cy="372.8" r="12.3" fill="#f7dc00" fill-opacity="0.95" stroke="#f7dc00" stroke-opacity="0.9" stroke-width="1.2"/></g>
<g font-family="Liberation Sans, sans-serif" font-weight="bold" font-size="11" text-anchor="middle" fill="#000" stroke="#fff" stroke-width="2" stroke-linejoin="round" paint-order="stroke"><text x="93.0" y="328.2">80</text><text x="120.7" y="259.3">68</text><text x="168.7" y="240.6">63</text><text x="159.6" y="236.1">256</text><text x="203.2" y="273.7">52</text><text x="226.4" y="269.3">241</text><text x="234.1" y="281.4">68</text><text x="239.6" y="290.2">63</text><text x="253.6" y="292.7">89</text><text x="261.6" y="255.29999999999998">107</text><text x="211.9" y="336.3">N/A</text><text x="196" y="359.59999999999997">96</text><text x="289.3" y="244.0">142</text><text x="303.4" y="238.39999999999998">86</text><text x="287.9" y="252.5">94</text><text x="288.7" y="266.7">126</text><text x="304.4" y="268.5">137</text><text x="293.4" y="266.09999999999997">443</text><text x="299.5" y="275.9">393</text><text x="309.0" y="283.5">183</text><text x="330.2" y="286.3">180</text><text x="384.7" y="220.89999999999998">181</text><text x="409.8" y="249.2">120</text><text x="426.7" y="242.6">156</text><text x="378.2" y="277.3">180</text><text x="421.9" y="276.5">59</text><text x="344.3" y="296.2">385</text><text x="338.7" y="299.9">188</text><text x="357" y="316.0">98</text><text x="374" y="313.2">59</text><text x="382.4" y="304.7">182</text><text x="402.2" y="299.9">N/A</text><text x="384.8" y="332.7">74</text><text x="283.6" y="294.2">165</text><text x="297.7" y="310.3">162</text><text x="312.4" y="314.0">98</text><text x="316.1" y="325.9">55</text><text x="316.2" y="342.4">75</text><text x="385.1" y="376.0">164</text></g>
</svg>
<div id="popup" class="abs">
<div id="ptab"><div style="position:absolute;left:0;top:0;width:104px;height:25px;background:#024a86"></div><div style="position:absolute;left:66.5px;top:25px;width:1px;height:24px;background:#024a86"></div><div style="position:absolute;left:67.5px;top:25px;width:36.5px;height:23.5px;background:#ffff00"></div></div>
</div>

<div class="panelh" style="top:2px"></div>
<div class="sel" style="top:36px;height:32px"><svg class="x" width="9" height="9" viewBox="0 0 9 9"><path d="M1 1 L8 8 M8 1 L1 8" stroke="#8a8a8a" stroke-width="1.05"/></svg><span class="ar"></span></div>
<div class="panelh" style="top:85px;height:32px;border-color:#024a86"></div>
<div class="sel" style="top:117px;height:32.5px"><svg class="x" width="9" height="9" viewBox="0 0 9 9"><path d="M1 1 L8 8 M8 1 L1 8" stroke="#8a8a8a" stroke-width="1.05"/></svg><span class="ar"></span></div>
<div id="box" class="abs">
<div id="rss"><svg width="32" height="31" viewBox="0 0 32 31"><circle cx="7.1" cy="24" r="3.3" fill="#fff"/><path d="M3.9 5.8 A21.3 21.3 0 0 1 25.2 27.1" stroke="#fff" stroke-width="4.4" fill="none"/><path d="M3.9 13.9 A13.2 13.2 0 0 1 17.1 27.1" stroke="#fff" stroke-width="4.5" fill="none"/></svg></div>
</div>

<div id="tabs" class="abs">
<div class="tab on" style="left:0;width:96px"></div>
<div class="tab" style="left:99px;width:151px"></div>
<div class="tab" style="left:253px;width:125px"></div>
</div>
<svg class="chart" width="815" height="763" viewBox="0 0 815 763" font-family="Liberation Sans, sans-serif"><text x="308" y="518" text-anchor="middle" font-size="16" fill="#333" letter-spacing="0.6">Bishkek &#8211; PM2.5</text><text x="62.3" y="722.4" text-anchor="end" font-size="10" letter-spacing="0.8" fill="#111">0</text><rect x="74.6" y="685.7" width="524.0" height="1" fill="#e6e6e6"/><text x="62.3" y="689.1" text-anchor="end" font-size="10" letter-spacing="0.8" fill="#111">100</text><rect x="74.6" y="652.3" width="524.0" height="1" fill="#e6e6e6"/><text x="62.3" y="655.7" text-anchor="end" font-size="10" letter-spacing="0.8" fill="#111">200</text><rect x="74.6" y="619.0" width="524.0" height="1" fill="#e6e6e6"/><text x="62.3" y="622.4" text-anchor="end" font-size="10" letter-spacing="0.8" fill="#111">300</text><rect x="74.6" y="585.7" width="524.0" height="1" fill="#e6e6e6"/><text x="62.3" y="589.1" text-anchor="end" font-size="10" letter-spacing="0.8" fill="#111">400</text><rect x="74.6" y="552.4" width="524.0" height="1" fill="#e6e6e6"/><text x="62.3" y="555.8" text-anchor="end" font-size="10" letter-spacing="0.8" fill="#111">500</text><text transform="translate(34.5,631.5) rotate(-90)" text-anchor="middle" font-size="12" fill="#333">AQI</text><rect x="79.8" y="663.8" width="11.4" height="55.7" fill="#ff0000" stroke="#222" stroke-width="1"/><rect x="101.6" y="667.5" width="11.4" height="52.0" fill="#ff0000" stroke="#222" stroke-width="1"/><rect x="123.5" y="668.2" width="11.4" height="51.3" fill="#ff0000" stroke="#222" stroke-width="1"/><rect x="145.3" y="669.2" width="11.4" height="50.3" fill="#ff7e00" stroke="#222" stroke-width="1"/><rect x="167.2" y="667.5" width="11.4" height="52.0" fill="#ff0000" stroke="#222" stroke-width="1"/><rect x="189.0" y="664.8" width="11.4" height="54.7" fill="#ff0000" stroke="#222" stroke-width="1"/><rect x="210.8" y="663.2" width="11.4" height="56.3" fill="#ff0000" stroke="#222" stroke-width="1"/><rect x="232.7" y="667.5" width="11.4" height="52.0" fill="#ff0000" stroke="#222" stroke-width="1"/><rect x="254.5" y="677.2" width="11.4" height="42.3" fill="#ff7e00" stroke="#222" stroke-width="1"/><rect x="276.3" y="687.2" width="11.4" height="32.3" fill="#ffff00" stroke="#222" stroke-width="1"/><rect x="298.2" y="691.5" width="11.4" height="28.0" fill="#ffff00" stroke="#222" stroke-width="1"/><rect x="320.0" y="695.2" width="11.4" height="24.3" fill="#ffff00" stroke="#222" stroke-width="1"/><rect x="341.8" y="696.2" width="11.4" height="23.3" fill="#ffff00" stroke="#222" stroke-width="1"/><rect x="363.7" y="696.2" width="11.4" height="23.3" fill="#ffff00" stroke="#222" stroke-width="1"/><rect x="385.5" y="697.2" width="11.4" height="22.3" fill="#ffff00" stroke="#222" stroke-width="1"/><rect x="407.3" y="695.2" width="11.4" height="24.3" fill="#ffff00" stroke="#222" stroke-width="1"/><rect x="429.2" y="694.2" width="11.4" height="25.3" fill="#ffff00" stroke="#222" stroke-width="1"/><rect x="451.0" y="691.5" width="11.4" height="28.0" fill="#ffff00" stroke="#222" stroke-width="1"/><rect x="472.8" y="692.2" width="11.4" height="27.3" fill="#ffff00" stroke="#222" stroke-width="1"/><rect x="494.7" y="695.2" width="11.4" height="24.3" fill="#ffff00" stroke="#222" stroke-width="1"/><rect x="516.5" y="695.2" width="11.4" height="24.3" fill="#ffff00" stroke="#222" stroke-width="1"/><rect x="538.3" y="694.2" width="11.4" height="25.3" fill="#ffff00" stroke="#222" stroke-width="1"/><rect x="560.1" y="693.2" width="11.4" height="26.3" fill="#ffff00" stroke="#222" stroke-width="1"/><rect x="582.0" y="690.5" width="11.4" height="29.0" fill="#ffff00" stroke="#222" stroke-width="1"/><rect x="74.6" y="719.0" width="524.0" height="1" fill="#ccd6eb"/><rect x="74.1" y="719.5" width="1" height="8" fill="#ccd6eb"/><rect x="95.9" y="719.5" width="1" height="8" fill="#ccd6eb"/><rect x="117.8" y="719.5" width="1" height="8" fill="#ccd6eb"/><rect x="139.6" y="719.5" width="1" height="8" fill="#ccd6eb"/><rect x="161.4" y="719.5" width="1" height="8" fill="#ccd6eb"/><rect x="183.3" y="719.5" width="1" height="8" fill="#ccd6eb"/><rect x="205.1" y="719.5" width="1" height="8" fill="#ccd6eb"/><rect x="226.9" y="719.5" width="1" height="8" fill="#ccd6eb"/><rect x="248.8" y="719.5" width="1" height="8" fill="#ccd6eb"/><rect x="270.6" y="719.5" width="1" height="8" fill="#ccd6eb"/><rect x="292.4" y="719.5" width="1" height="8" fill="#ccd6eb"/><rect x="314.3" y="719.5" width="1" height="8" fill="#ccd6eb"/><rect x="336.1" y="719.5" width="1" height="8" fill="#ccd6eb"/><rect x="357.9" y="719.5" width="1" height="8" fill="#ccd6eb"/><rect x="379.8" y="719.5" width="1" height="8" fill="#ccd6eb"/><rect x="401.6" y="719.5" width="1" height="8" fill="#ccd6eb"/><rect x="423.4" y="719.5" width="1" height="8" fill="#ccd6eb"/><rect x="445.3" y="719.5" width="1" height="8" fill="#ccd6eb"/><rect x="467.1" y="719.5" width="1" height="8" fill="#ccd6eb"/><rect x="488.9" y="719.5" width="1" height="8" fill="#ccd6eb"/><rect x="510.8" y="719.5" width="1" height="8" fill="#ccd6eb"/><rect x="532.6" y="719.5" width="1" height="8" fill="#ccd6eb"/><rect x="554.4" y="719.5" width="1" height="8" fill="#ccd6eb"/><rect x="576.3" y="719.5" width="1" height="8" fill="#ccd6eb"/><rect x="598.1" y="719.5" width="1" height="8" fill="#ccd6eb"/><text transform="translate(88.3,734.4) rotate(-45)" text-anchor="end" font-size="10" letter-spacing="0.3" fill="#666">8 PM</text><text transform="translate(110.1,734.4) rotate(-45)" text-anchor="end" font-size="10" letter-spacing="0.3" fill="#666">9 PM</text><text transform="translate(132.0,734.4) rotate(-45)" text-anchor="end" font-size="10" letter-spacing="0.3" fill="#666">10 PM</text><text transform="translate(153.8,734.4) rotate(-45)" text-anchor="end" font-size="10" letter-spacing="0.3" fill="#666">11 PM</text><text transform="translate(175.7,734.4) rotate(-45)" text-anchor="end" font-size="10" letter-spacing="0.3" fill="#666">1/1/2020 12 AM</text><text transform="translate(197.5,734.4) rotate(-45)" text-anchor="end" font-size="10" letter-spacing="0.3" fill="#666">1 AM</text><text transform="translate(219.3,734.4) rotate(-45)" text-anchor="end" font-size="10" letter-spacing="0.3" fill="#666">2 AM</text><text transform="translate(241.2,734.4) rotate(-45)" text-anchor="end" font-size="10" letter-spacing="0.3" fill="#666">3 AM</text><text transform="translate(263.0,734.4) rotate(-45)" text-anchor="end" font-size="10" letter-spacing="0.3" fill="#666">4 AM</text><text transform="translate(284.8,734.4) rotate(-45)" text-anchor="end" font-size="10" letter-spacing="0.3" fill="#666">5 AM</text><text transform="translate(306.7,734.4) rotate(-45)" text-anchor="end" font-size="10" letter-spacing="0.3" fill="#666">6 AM</text><text transform="translate(328.5,734.4) rotate(-45)" text-anchor="end" font-size="10" letter-spacing="0.3" fill="#666">7 AM</text><text transform="translate(350.3,734.4) rotate(-45)" text-anchor="end" font-size="10" letter-spacing="0.3" fill="#666">8 AM</text><text transform="translate(372.2,734.4) rotate(-45)" text-anchor="end" font-size="10" letter-spacing="0.3" fill="#666">9 AM</text><text transform="translate(394.0,734.4) rotate(-45)" text-anchor="end" font-size="10" letter-spacing="0.3" fill="#666">10 AM</text><text transform="translate(415.8,734.4) rotate(-45)" text-anchor="end" font-size="10" letter-spacing="0.3" fill="#666">11 AM</text><text transform="translate(437.7,734.4) rotate(-45)" text-anchor="end" font-size="10" letter-spacing="0.3" fill="#666">12 PM</text><text transform="translate(459.5,734.4) rotate(-45)" text-anchor="end" font-size="10" letter-spacing="0.3" fill="#666">1 PM</text><text transform="translate(481.3,734.4) rotate(-45)" text-anchor="end" font-size="10" letter-spacing="0.3" fill="#666">2 PM</text><text transform="translate(503.2,734.4) rotate(-45)" text-anchor="end" font-size="10" letter-spacing="0.3" fill="#666">3 PM</text><text transform="translate(525.0,734.4) rotate(-45)" text-anchor="end" font-size="10" letter-spacing="0.3" fill="#666">4 PM</text><text transform="translate(546.8,734.4) rotate(-45)" text-anchor="end" font-size="10" letter-spacing="0.3" fill="#666">5 PM</text><text transform="translate(568.6,734.4) rotate(-45)" text-anchor="end" font-size="10" letter-spacing="0.3" fill="#666">6 PM</text><text transform="translate(590.5,734.4) rotate(-45)" text-anchor="end" font-size="10" letter-spacing="0.3" fill="#666">7 PM</text></svg>
<div id="cc" class="abs">
<div id="cch"></div>
<div id="ccy"></div>
</div>
<div class="tx" style="left:65.6px;top:15.65px;font-size:17.9px;line-height:17.9px;font-weight:normal;color:#fff;letter-spacing:0px;">AirNow Department of State</div>
<div class="tx" style="left:563.6px;top:11.47px;font-size:13.5px;line-height:13.5px;font-weight:normal;color:#fff;letter-spacing:0px;">Select a City</div>
<div class="tx" style="left:563.6px;top:92.73px;font-size:13.2px;line-height:13.2px;font-weight:normal;color:#fff;letter-spacing:0px;">Select a Parameter</div>
<div class="tx" style="left:567.6px;top:45.59px;font-size:11px;line-height:11px;font-weight:normal;color:#333;letter-spacing:0.12px;">Bishkek</div>
<div class="tx" style="left:567.6px;top:127.39px;font-size:11px;line-height:11px;font-weight:normal;color:#333;letter-spacing:0.12px;">PM2.5</div>
<div class="tx" style="left:569.2px;top:174.98px;font-size:12.9px;line-height:12.9px;font-weight:bold;color:#444;letter-spacing:0px;">Bishkek</div>
<div class="tx" style="left:559.2px;top:242.20px;font-size:9.8px;line-height:9.8px;font-weight:normal;color:#222;letter-spacing:0.38px;">Note: Values above 500 are considered Beyond the</div>
<div class="tx" style="left:559.2px;top:256.20px;font-size:9.8px;line-height:9.8px;font-weight:normal;color:#222;letter-spacing:0.38px;">AQI. Follow recommendations for the Hazardous</div>
<div class="tx" style="left:559.2px;top:270.20px;font-size:9.8px;line-height:9.8px;font-weight:normal;color:#222;letter-spacing:0.38px;">category. Additional information on reducing</div>
<div class="tx" style="left:559.2px;top:284.20px;font-size:9.8px;line-height:9.8px;font-weight:normal;color:#222;letter-spacing:0.38px;">exposure to extremely high levels of particle</div>
<div class="tx" style="left:559.2px;top:298.20px;font-size:9.8px;line-height:9.8px;font-weight:normal;color:#222;letter-spacing:0.38px;">pollution is available <a>here</a>.</div>
<div class="tx" style="left:125.5px;width:400px;text-align:center;top:108.74px;font-size:13.3px;line-height:13.3px;font-weight:normal;color:#111;letter-spacing:0px;">Bishkek</div>
<div class="tx" style="left:125.5px;width:400px;text-align:center;top:122.88px;font-size:12.9px;line-height:12.9px;font-weight:normal;color:#111;letter-spacing:0px;">2020-01-01 7:00</div>
<div class="tx" style="left:125.5px;width:400px;text-align:center;top:136.68px;font-size:12.9px;line-height:12.9px;font-weight:normal;color:#111;letter-spacing:0px;">PM (LT)</div>
<div class="tx" style="left:106px;width:400px;text-align:center;top:158.33px;font-size:11.3px;line-height:11.3px;font-weight:bold;color:#fff;letter-spacing:0px;">Pollutant</div>
<div class="tx" style="left:158.8px;width:400px;text-align:center;top:158.33px;font-size:11.3px;line-height:11.3px;font-weight:bold;color:#fff;letter-spacing:0px;">AQI</div>
<div class="tx" style="left:106px;width:400px;text-align:center;top:183.68px;font-size:10.3px;line-height:10.3px;font-weight:normal;color:#333;letter-spacing:0px;">PM2.5</div>
<div class="tx" style="left:158.8px;width:400px;text-align:center;top:183.68px;font-size:10.3px;line-height:10.3px;font-weight:normal;color:#111;letter-spacing:0px;">86</div>
<div class="tx" style="left:-145.2px;width:400px;text-align:center;top:432.55px;font-size:12.7px;line-height:12.7px;font-weight:normal;color:#333;letter-spacing:0.3px;">AQI</div>
<div class="tx" style="left:-19px;width:400px;text-align:center;top:432.72px;font-size:12.5px;line-height:12.5px;font-weight:normal;color:#777;letter-spacing:0.25px;">Concentration</div>
<div class="tx" style="left:122px;width:400px;text-align:center;top:432.72px;font-size:12.5px;line-height:12.5px;font-weight:normal;color:#777;letter-spacing:0.25px;">Historical</div>
<div class="tx" style="left:6.6px;top:462.97px;font-size:12.2px;line-height:12.2px;font-weight:normal;color:#333;letter-spacing:0.43px;">Learn more about how the Air Quality Index [AQI] is calculated from the EPA <a>here</a>.</div>
<div class="tx" style="left:514.5px;width:400px;text-align:center;top:503.87px;font-size:13.15px;line-height:13.15px;font-weight:bold;color:#fff;letter-spacing:0px;">Current Conditions</div>
<div class="tx" style="left:514.5px;width:400px;text-align:center;top:522.59px;font-size:11px;line-height:11px;font-weight:bold;color:#fff;letter-spacing:0.55px;">observed at</div>
<div class="tx" style="left:514.5px;width:400px;text-align:center;top:538.30px;font-size:13px;line-height:13px;font-weight:bold;color:#fff;letter-spacing:0px;">Jan 1, 2020 7:00 PM (LT)</div>
<div class="tx" style="left:514.5px;width:400px;text-align:center;top:578.63px;font-size:17.8px;line-height:17.8px;font-weight:bold;color:#000;letter-spacing:0px;">86 AQI</div>
<div class="tx" style="left:514.5px;width:400px;text-align:center;top:603.73px;font-size:17.8px;line-height:17.8px;font-weight:bold;color:#000;letter-spacing:0px;">Moderate</div>
<div class="tx" style="left:514.5px;width:400px;text-align:center;top:629.73px;font-size:17.8px;line-height:17.8px;font-weight:bold;color:#000;letter-spacing:0px;">PM2.5</div>
<div class="tx" style="left:514.5px;width:400px;text-align:center;top:676.13px;font-size:11.3px;line-height:11.3px;font-weight:bold;color:#333;letter-spacing:0.2px;">Health Message</div>
<div class="tx" style="left:626.6px;top:695.57px;font-size:10.9px;line-height:10.9px;font-weight:normal;color:#333;letter-spacing:0.08px;">The AQI is between 51 and 100. Air</div>
<div class="tx" style="left:626.6px;top:710.67px;font-size:10.9px;line-height:10.9px;font-weight:normal;color:#333;letter-spacing:0.08px;">quality is acceptable; however,</div>
<div class="tx" style="left:626.6px;top:725.77px;font-size:10.9px;line-height:10.9px;font-weight:normal;color:#333;letter-spacing:0.08px;">pollution in this range may pose a</div>
<div class="tx" style="left:626.6px;top:740.87px;font-size:10.9px;line-height:10.9px;font-weight:normal;color:#333;letter-spacing:0.08px;">moderate health concern for a very</div>
<div class="tx" style="left:626.6px;top:755.97px;font-size:10.9px;line-height:10.9px;font-weight:normal;color:#333;letter-spacing:0.08px;">small number of individuals. People</div>
</body></html>
